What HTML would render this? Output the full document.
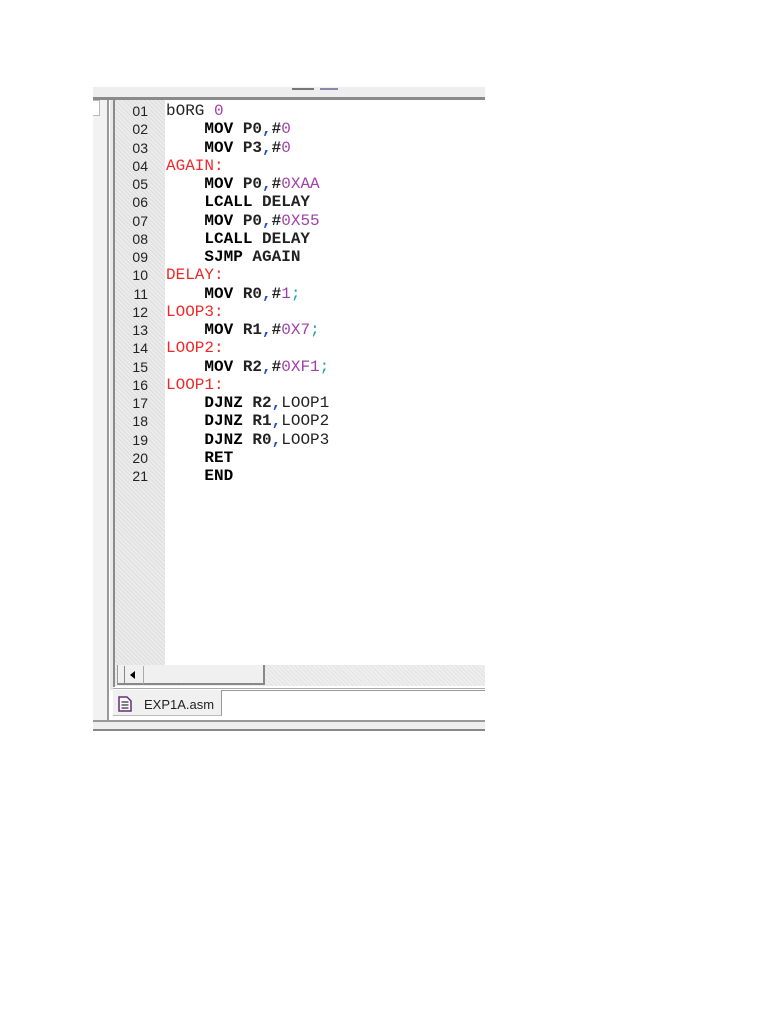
<!DOCTYPE html>
<html><head><meta charset="utf-8"><style>
body{margin:0;width:768px;height:1024px;background:#fff;position:relative;overflow:hidden;font-family:"Liberation Sans",sans-serif}
.a{position:absolute}
.code{font-family:"Liberation Mono",monospace;font-size:16px;line-height:18.25px;white-space:pre;color:#222;font-weight:bold}
.ln{font-family:"Liberation Sans",sans-serif;font-size:14px;line-height:18.25px;color:#222;text-align:right;width:30px}
b{color:#000}
.r{color:#f02828;font-weight:normal}.p{color:#a040a8;font-weight:normal}.c{color:#2050c0}.t{color:#20a0a0;font-weight:normal}
</style></head><body>
<div class="a" style="left:93px;top:87px;width:392px;height:10px;background:#eeeeee"></div>
<div class="a" style="left:292px;top:88px;width:22px;height:2px;background:#777"></div>
<div class="a" style="left:320px;top:88px;width:18px;height:2px;background:#88a"></div>
<div class="a" style="left:93px;top:97px;width:392px;height:3px;background:#8a8a8a"></div>
<div class="a" style="left:93px;top:100px;width:14px;height:622px;background:#f2f2f2"></div>
<div class="a" style="left:93px;top:100px;width:6px;height:14px;border:1px solid #bbb;border-left:none;background:#fff"></div>
<div class="a" style="left:107px;top:100px;width:2px;height:622px;background:#999"></div>
<div class="a" style="left:110px;top:100px;width:3px;height:590px;background:#e8e8e8"></div>
<div class="a" style="left:113px;top:100px;width:2px;height:587px;background:#8a8a8a"></div>
<div class="a" style="left:115px;top:100px;width:50px;height:565px;background:repeating-linear-gradient(45deg,#dedede 0 1px,#ebebeb 1px 3px)"></div>
<div class="a ln" style="left:118px;top:102px">01<br>02<br>03<br>04<br>05<br>06<br>07<br>08<br>09<br>10<br>11<br>12<br>13<br>14<br>15<br>16<br>17<br>18<br>19<br>20<br>21</div>
<div class="a code" style="left:166px;top:102px"><span style="font-weight:normal">bORG</span> <span class="p">0</span>
    <b>MOV</b> P0<span class="c">,</span>#<span class="p">0</span>
    <b>MOV</b> P3<span class="c">,</span>#<span class="p">0</span>
<span class="r">AGAIN:</span>
    <b>MOV</b> P0<span class="c">,</span>#<span class="p">0XAA</span>
    <b>LCALL</b> DELAY
    <b>MOV</b> P0<span class="c">,</span>#<span class="p">0X55</span>
    <b>LCALL</b> DELAY
    <b>SJMP</b> AGAIN
<span class="r">DELAY:</span>
    <b>MOV</b> R0<span class="c">,</span>#<span class="p">1</span><span class="t">;</span>
<span class="r">LOOP3:</span>
    <b>MOV</b> R1<span class="c">,</span>#<span class="p">0X7</span><span class="t">;</span>
<span class="r">LOOP2:</span>
    <b>MOV</b> R2<span class="c">,</span>#<span class="p">0XF1</span><span class="t">;</span>
<span class="r">LOOP1:</span>
    <b>DJNZ</b> R2<span class="c">,</span><span style="font-weight:normal">LOOP1</span>
    <b>DJNZ</b> R1<span class="c">,</span><span style="font-weight:normal">LOOP2</span>
    <b>DJNZ</b> R0<span class="c">,</span><span style="font-weight:normal">LOOP3</span>
    <b>RET</b>
    <b>END</b></div>
<div class="a" style="left:115px;top:665px;width:370px;height:21px;background:repeating-linear-gradient(45deg,#e4e4e4 0 1px,#eeeeee 1px 3px)"></div>
<div class="a" style="left:117px;top:665px;width:145px;height:18px;background:#f0f0f0;border-right:2px solid #888;border-bottom:2px solid #888;border-left:1px solid #999"></div>
<div class="a" style="left:124px;top:666px;width:1px;height:18px;background:#888"></div>
<div class="a" style="left:143px;top:666px;width:1px;height:18px;background:#aaa"></div>
<div class="a" style="left:130px;top:671px;width:0;height:0;border-top:4px solid transparent;border-bottom:4px solid transparent;border-right:5px solid #000"></div>
<div class="a" style="left:113px;top:688px;width:372px;height:1px;background:#aaa"></div>
<div class="a" style="left:222px;top:690px;width:263px;height:26px;background:#fff;border-top:1px solid #999"></div>
<div class="a" style="left:113px;top:690px;width:108px;height:25px;background:#f0f0f0;border-right:1px solid #999;border-bottom:1px solid #bbb"></div>
<svg class="a" style="left:117px;top:696px" width="16" height="16" viewBox="0 0 16 16"><path d="M2 1h8l4 4v10H2z" fill="#fff" stroke="#6a2a7a" stroke-width="1.5"/><path d="M4.5 6h7M4.5 9h7M4.5 12h7" stroke="#333" stroke-width="1.3"/></svg>
<div class="a" style="left:144px;top:697px;font-size:13px;color:#222">EXP1A.asm</div>
<div class="a" style="left:93px;top:720px;width:392px;height:2px;background:#999"></div>
<div class="a" style="left:93px;top:722px;width:392px;height:7px;background:#eee"></div>
<div class="a" style="left:93px;top:729px;width:392px;height:2px;background:#888"></div>
</body></html>
